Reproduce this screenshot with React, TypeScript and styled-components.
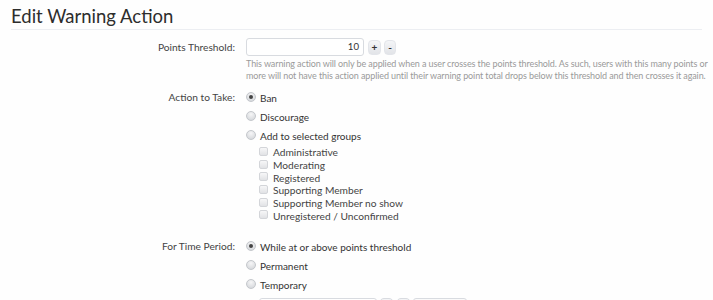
import React from 'react';
import styled, { createGlobalStyle } from 'styled-components';

const GlobalStyle = createGlobalStyle`
  body {
    margin: 0;
    background: #fefefe;
    font-family: "Lato", "Liberation Sans", sans-serif;
    color: #333;
  }
`;

const Page = styled.div`
  padding: 4px 11px 0 11px;
  height: 300px;
  overflow: hidden;
  box-sizing: border-box;
`;

const Title = styled.h1`
  margin: 0;
  font-size: 18.5px;
  font-weight: 400;
  line-height: 24px;
  color: #2d2d2d;
  padding-bottom: 1px;
  border-bottom: 1px solid #eceef2;
`;

const Form = styled.div`
  padding-top: 8px;
  display: flex;
  flex-direction: column;
`;

const Row = styled.div<{ $gap?: number }>`
  display: grid;
  grid-template-columns: 224px 1fr;
  column-gap: 11px;
  margin-bottom: ${p => p.$gap ?? 0}px;
`;

const Label = styled.div<{ $top?: number }>`
  text-align: right;
  font-size: 10.2px;
  color: #444;
  padding-top: ${p => p.$top ?? 0}px;
`;

const Controls = styled.div`
  display: flex;
  flex-direction: column;
`;

const Spinner = styled.div`
  display: flex;
  align-items: center;
  gap: 3px;
`;

const NumberBox = styled.div`
  width: 112px;
  height: 16px;
  border: 1px solid #d8dbe0;
  border-radius: 3px;
  background: #fff;
  font-size: 9.6px;
  text-align: right;
  padding-right: 4px;
  line-height: 16px;
  color: #333;
  margin-right: 1px;
`;

const SpinButton = styled.div<{ $w?: number }>`
  width: ${p => p.$w ?? 12}px;
  height: 15px;
  border-radius: 4px;
  background: linear-gradient(#f4f5f7, #e2e4e8);
  border: 1px solid #e3e5ea;
  font-size: 10px;
  font-weight: 700;
  color: #333;
  display: flex;
  align-items: center;
  justify-content: center;
  box-sizing: border-box;
`;

const Hint = styled.p`
  margin: 2px 0 0 0;
  font-size: 9px;
  letter-spacing: -0.1px;
  line-height: 12px;
  color: #9a9a9a;
  white-space: nowrap;
`;

const OptionRow = styled.label`
  display: flex;
  align-items: center;
  height: 19px;
  font-size: 10px;
  color: #333;
  gap: 4px;
`;

const Radio = styled.span<{ $on?: boolean }>`
  width: 10px;
  height: 10px;
  border-radius: 50%;
  box-sizing: border-box;
  border: 1px solid #c4c7cc;
  background: radial-gradient(circle at 50% 30%, #f6f6f7, #cfd2d6);
  display: flex;
  align-items: center;
  justify-content: center;
  margin-top: -2px;
  &::after {
    content: '';
    width: 4px;
    height: 4px;
    border-radius: 50%;
    background: #444;
    display: ${p => (p.$on ? 'block' : 'none')};
  }
`;

const GroupList = styled.div`
  display: flex;
  flex-direction: column;
  padding-left: 13px;
  padding-top: 1px;
`;

const CheckRow = styled.label`
  display: flex;
  align-items: center;
  height: 12.7px;
  font-size: 10.2px;
  color: #444;
  gap: 5px;
`;

const Check = styled.span`
  width: 9px;
  height: 9px;
  border-radius: 2px;
  box-sizing: border-box;
  border: 1px solid #d3d5d9;
  background: linear-gradient(#f7f7f8, #e1e2e5);
  margin-top: -2px;
`;

const DateRow = styled.div`
  display: flex;
  gap: 2px;
  padding-left: 13px;
  padding-top: 4px;
`;

const DateBox = styled.div`
  width: 116px;
  height: 16px;
  border: 1px solid #d8dbe0;
  border-radius: 3px;
  background: #fff;
`;

const SmallBtn = styled.div`
  width: 13px;
  height: 16px;
  border: 1px solid #d8dbe0;
  border-radius: 5px;
  background: #f3f4f6;
`;

const Select = styled.div`
  width: 52px;
  height: 16px;
  border: 1px solid #d8dbe0;
  border-radius: 3px;
  background: #fafafa;
`;

const groups = [
  'Administrative',
  'Moderating',
  'Registered',
  'Supporting Member',
  'Supporting Member no show',
  'Unregistered / Unconfirmed',
];

export default function App() {
  return (
    <>
      <GlobalStyle />
      <Page>
        <Title>Edit Warning Action</Title>
        <Form>
          <Row $gap={6}>
            <Label $top={3}>Points Threshold:</Label>
            <Controls>
              <Spinner>
                <NumberBox>10</NumberBox>
                <SpinButton $w={13}>+</SpinButton>
                <SpinButton $w={12}>-</SpinButton>
              </Spinner>
              <Hint>
                This warning action will only be applied when a user crosses the points threshold. As such, users with this many points or
                <br />
                more will not have this action applied until their warning point total drops below this threshold and then crosses it again.
              </Hint>
            </Controls>
          </Row>
          <Row $gap={15}>
            <Label $top={3}>Action to Take:</Label>
            <Controls>
              <OptionRow><Radio $on />Ban</OptionRow>
              <OptionRow><Radio />Discourage</OptionRow>
              <OptionRow><Radio />Add to selected groups</OptionRow>
              <GroupList>
                {groups.map(g => (
                  <CheckRow key={g}><Check />{g}</CheckRow>
                ))}
              </GroupList>
            </Controls>
          </Row>
          <Row>
            <Label $top={3}>For Time Period:</Label>
            <Controls>
              <OptionRow><Radio $on />While at or above points threshold</OptionRow>
              <OptionRow><Radio />Permanent</OptionRow>
              <OptionRow><Radio />Temporary</OptionRow>
              <DateRow>
                <DateBox />
                <SmallBtn />
                <SmallBtn />
                <Select />
              </DateRow>
            </Controls>
          </Row>
        </Form>
      </Page>
    </>
  );
}
